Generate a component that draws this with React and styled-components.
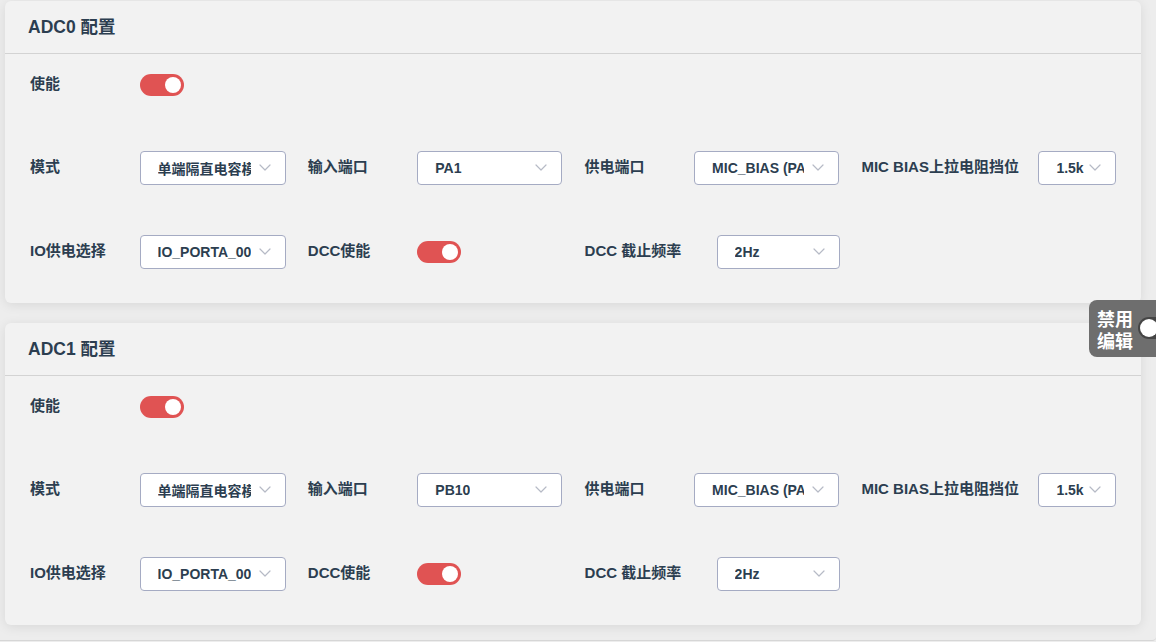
import React from 'react';
import styled, { createGlobalStyle } from 'styled-components';

const GlobalStyle = createGlobalStyle`
  html, body {
    margin: 0;
    padding: 0;
    background: #ededed;
    font-family: "Liberation Sans", "Noto Sans CJK SC", sans-serif;
    color: #2c3e50;
    overflow: hidden;
  }
`

const Page = styled.div`
  height: 641px;
  padding: 1px 15px 0 5px;
  box-sizing: border-box;
  border-bottom: 1px solid #d6d6d6;
  border-bottom-right-radius: 4px;
`

const Card = styled.section`
  background: #f2f2f2;
  border-radius: 6px;
  box-shadow: 0 2px 12px rgba(0, 0, 0, 0.09);
  margin-bottom: 20px;
`

const CardHeader = styled.header`
  height: 53px;
  box-sizing: border-box;
  display: flex;
  align-items: center;
  padding: 0 0 4px 23px;
  border-bottom: 1px solid #d3d3d3;
  font-size: 17.5px;
  font-weight: 700;
  color: #2c3e50;
`

const CardBody = styled.div`
  padding: 13.5px 25px 34.5px;
  display: flex;
  flex-direction: column;
  gap: 49.5px;
`

const Row = styled.div`
  display: flex;
  align-items: center;
  height: 34px;
`

const Item = styled.div`
  display: flex;
  align-items: center;
  margin-right: 22.3px;
`

const Label = styled.span`
  min-width: ${p => p.$w || 93.5}px;
  margin-right: 16px;
  padding-bottom: 5px;
  font-size: 15px;
  font-weight: 600;
  white-space: nowrap;
  color: #2c3e50;
`

const Slot = styled.div`
  width: ${p => p.$w || 146}px;
  display: flex;
  align-items: center;
`

const SelectBox = styled.div`
  position: relative;
  width: ${p => p.$w || 146}px;
  height: 34px;
  box-sizing: border-box;
  background: #fff;
  border: 1px solid #a5abc3;
  border-radius: 4px;
  display: flex;
  align-items: center;
  padding: 0 ${p => p.$pr || 34}px 0 17px;
  font-size: 14px;
  font-weight: 600;
  color: #2c3e50;
  white-space: nowrap;
  overflow: hidden;
  svg {
    position: absolute;
    right: 14px;
    top: 50%;
    margin-top: -4px;
  }
`

const SelectText = styled.span`
  overflow: hidden;
  display: block;
`

const Switch = styled.div`
  width: 44px;
  height: 22px;
  border-radius: 11px;
  background: #e05353;
  position: relative;
  &::after {
    content: '';
    position: absolute;
    right: 3px;
    top: 3px;
    width: 16px;
    height: 16px;
    border-radius: 50%;
    background: #fff;
  }
`

const FloatPanel = styled.div`
  position: fixed;
  left: 1089px;
  top: 300px;
  width: 90px;
  height: 57px;
  box-sizing: border-box;
  background: #6e6e6e;
  border-radius: 8px;
  padding: 7px 0 0 8px;
  display: flex;
  align-items: flex-start;
`

const FloatText = styled.div`
  color: #fff;
  font-family: "Noto Sans CJK SC", sans-serif;
  font-size: 18px;
  font-weight: 700;
  line-height: 22px;
  width: 40px;
`

const FloatTrack = styled.div`
  margin-top: 10px;
  margin-left: 1px;
  width: 40px;
  height: 22px;
  border-radius: 11px;
  background: #454545;
  position: relative;
  &::after {
    content: '';
    position: absolute;
    left: 2px;
    top: 2px;
    width: 18px;
    height: 18px;
    border-radius: 50%;
    background: #fff;
  }
`

const Chevron = () => (
  <svg width="12" height="7" viewBox="0 0 12 7" fill="none">
    <path d="M1 1l5 5 5-5" stroke="#b6bac6" strokeWidth="1.2" strokeLinecap="round" strokeLinejoin="round" />
  </svg>
)

const Select = ({ value, w, pr }) => (
  <SelectBox $w={w} $pr={pr}>
    <SelectText>{value}</SelectText>
    <Chevron />
  </SelectBox>
)

const AdcCard = ({ name, port }) => (
  <Card>
    <CardHeader>{name} 配置</CardHeader>
    <CardBody>
      <Row>
        <Item>
          <Label>使能</Label>
          <Switch />
        </Item>
      </Row>
      <Row>
        <Item>
          <Label>模式</Label>
          <Select value="单端隔直电容模式" />
        </Item>
        <Item>
          <Label>输入端口</Label>
          <Select value={port} w={145} />
        </Item>
        <Item>
          <Label>供电端口</Label>
          <Select value="MIC_BIAS (PA2)" w={145} />
        </Item>
        <Item>
          <Label $w={161}>MIC BIAS上拉电阻挡位</Label>
          <Select value="1.5k" w={78} pr={28} />
        </Item>
      </Row>
      <Row>
        <Item>
          <Label>IO供电选择</Label>
          <Select value="IO_PORTA_00" />
        </Item>
        <Item>
          <Label>DCC使能</Label>
          <Slot $w={145}>
            <Switch />
          </Slot>
        </Item>
        <Item>
          <Label $w={116}>DCC 截止频率</Label>
          <Select value="2Hz" w={123} />
        </Item>
      </Row>
    </CardBody>
  </Card>
)

export default function App () {
  return (
    <>
      <GlobalStyle />
      <Page>
        <AdcCard name="ADC0" port="PA1" />
        <AdcCard name="ADC1" port="PB10" />
      </Page>
      <FloatPanel>
        <FloatText>禁用编辑</FloatText>
        <FloatTrack />
      </FloatPanel>
    </>
  )
}
